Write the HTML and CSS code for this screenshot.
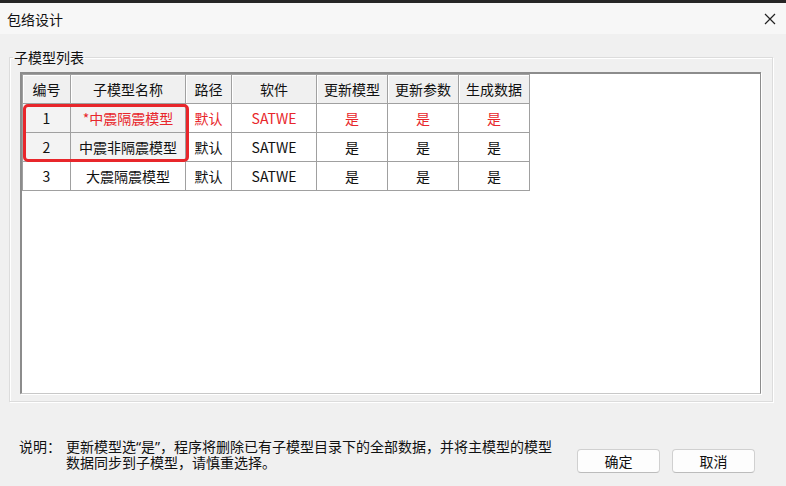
FILE: index.html
```html
<!DOCTYPE html>
<html lang="zh-CN">
<head>
<meta charset="UTF-8">
<link rel="stylesheet" href="styles.css">
<title>包络设计</title>
</head>
<body>

<div class="shade"></div>

<div class="titlebar">
<span class="title">包络设计</span>
<span class="closeBtn">
<svg width="12" height="12" viewBox="0 0 12 12"><path d="M1 1L11 11M11 1L1 11" stroke="#222" stroke-width="1.2" fill="none"/></svg>
</span>
</div>

<main class="content">

<fieldset class="groupBox">
<legend class="groupTitle">子模型列表</legend>

<div class="listBox">
<table class="grid">
<colgroup>
<col style="width:48px"><col style="width:115px"><col style="width:46px"><col style="width:85px"><col style="width:71px"><col style="width:71px"><col style="width:71px">
</colgroup>
<thead>
<tr><th>编号</th><th>子模型名称</th><th>路径</th><th>软件</th><th>更新模型</th><th>更新参数</th><th>生成数据</th></tr>
</thead>
<tbody>
<tr><td class="fixed">1</td><td class="fixed red">*中震隔震模型</td><td class="red">默认</td><td class="red">SATWE</td><td class="red">是</td><td class="red">是</td><td class="red">是</td></tr>
<tr><td class="fixed">2</td><td class="fixed">中震非隔震模型</td><td>默认</td><td>SATWE</td><td>是</td><td>是</td><td>是</td></tr>
<tr><td>3</td><td>大震隔震模型</td><td>默认</td><td>SATWE</td><td>是</td><td>是</td><td>是</td></tr>
</tbody>
</table>
<div class="markBox"></div>
</div>

</fieldset>

<div class="footer">
<div class="note">
<span class="noteLabel">说明：</span>
<span class="noteText">更新模型选<span class="quote">“</span>是<span class="quote">”</span>，程序将删除已有子模型目录下的全部数据，并将主模型的模型<br>数据同步到子模型，请慎重选择。</span>
</div>
<div class="btnRow">
<button class="btns">确定</button>
<button class="btns">取消</button>
</div>
</div>

</main>

</body>
</html>
```

FILE: styles.css
```css
*,*:before,*:after{
margin:0;
padding:0;
box-sizing:border-box;
}

:root{
--ui_font:"Noto Sans CJK SC","Noto Sans",sans-serif;
--bg:#f0f0f0;
--line:#a0a0a0;
--red:#e8262b;
}

html,body{
width:786px;
height:486px;
overflow:hidden;
}

body{
background:var(--bg);
font-family:var(--ui_font);
font-size:14px;
color:#111;
display:flex;
flex-direction:column;
}

.shade{
height:3px;
background:#262626;
}

.titlebar{
height:31px;
background:#f7f7f7;
display:flex;
align-items:center;
justify-content:space-between;
padding:0 10px 0 7px;
}

.title{
font-size:14px;
}

.closeBtn{
display:flex;
align-items:center;
}

.content{
flex:1;
display:flex;
flex-direction:column;
padding:15px 13px 0 9px;
}

.groupBox{
border:1px solid #dcdcdc;
box-shadow:inset 1px 1px 0 #fff, 1px 1px 0 #fff;
height:353px;
padding:7px 11px 0 0;
}

.groupTitle{
margin-left:3px;
padding:0 1px;
font-size:14px;
line-height:16px;
}

.listBox{
position:relative;
height:322px;
margin-left:10px;
background:#fff;
border-top:2px solid #8c8c8c;
border-left:2px solid #8c8c8c;
border-right:1px solid #8c8c8c;
border-bottom:1px solid #c8c8c8;
box-shadow:1px 1px 0 #fff;
}

.grid{
border-collapse:collapse;
table-layout:fixed;
width:507px;
text-align:center;
}

.grid th,.grid td{
border:1px solid var(--line);
height:29px;
font-weight:normal;
white-space:nowrap;
}

.grid th{
background:var(--bg);
box-shadow:inset 1px 1px 0 #fff;
}

.grid td.fixed{
background:#f3f3f3;
}

.grid td.red{
color:var(--red);
}

.markBox{
position:absolute;
left:1px;
top:30px;
width:166px;
height:58px;
border:3px solid var(--red);
border-radius:5px;
}

.footer{
flex:1;
display:flex;
align-items:flex-end;
justify-content:space-between;
padding:0 18px 13px 10px;
}

.note{
display:flex;
line-height:16px;
padding-bottom:3px;
white-space:nowrap;
}

.noteLabel{
width:47px;
flex-shrink:0;
}

.quote{
display:inline-block;
height:14px;
line-height:14px;
overflow:visible;
vertical-align:baseline;
font-family:"Noto Sans",sans-serif;
}

.btnRow{
display:flex;
gap:12px;
}

.btns{
width:83px;
height:24px;
font-family:var(--ui_font);
font-size:14px;
color:#111;
background:#fdfdfd;
border:1px solid #d0d0d0;
border-bottom-color:#bcbcbc;
border-radius:4px;
}
```
